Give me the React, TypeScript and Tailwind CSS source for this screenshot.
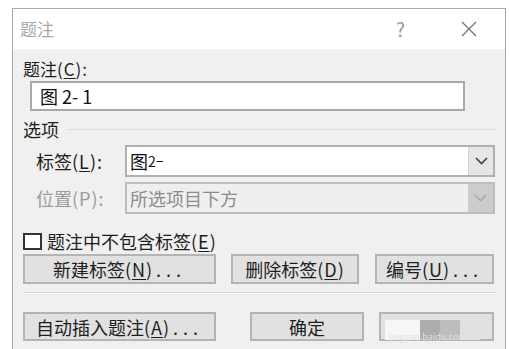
import React from "react";

const font = { fontFamily: '"Noto Sans CJK SC", "Noto Sans", sans-serif' };

function Key({ k }: { k: string }) {
  return (
    <span className="tracking-[1px]">
      (<span className="underline underline-offset-2">{k}</span>)
    </span>
  );
}

function Dots() {
  return <span className="ml-[3px] tracking-[5px]">...</span>;
}

function Chevron({ color }: { color: string }) {
  return (
    <svg width="13" height="8" viewBox="0 0 13 8" fill="none">
      <path d="M1 1l5.5 5.5L12 1" stroke={color} strokeWidth="1.6" />
    </svg>
  );
}

function Button({ className, children }: { className: string; children?: React.ReactNode }) {
  return (
    <div
      className={`flex items-center justify-center border-2 border-[#b4b4b4] bg-[#e1e1e1] text-[18px] leading-none text-[#1e1e1e] ${className}`}
    >
      {children}
    </div>
  );
}

export default function App() {
  return (
    <div className="h-[349px] w-[509px] overflow-hidden bg-white" style={font}>
      <div className="ml-[12px] mt-[8px] h-[341px] w-[494px] border-l border-r border-t border-[#a8a8a8] bg-[#f0f0f0]">
        {/* title bar */}
        <div className="flex h-[40px] items-center bg-white pl-[7px] pr-[28px]">
          <span className="text-[17px] text-[#a9a9a9]">题注</span>
          <span className="ml-auto mr-[56px] text-[19px] text-[#9a9a9a]">?</span>
          <svg width="16" height="16" viewBox="0 0 16 16">
            <path d="M1 1l14 14M15 1L1 15" stroke="#6f6f6f" strokeWidth="1.2" />
          </svg>
        </div>

        <div className="pl-[10px] leading-none text-[#1e1e1e]">
          <div className="mt-[8px] flex h-[22px] items-center text-[17px]">
            题注<Key k="C" />:
          </div>
          <div className="ml-[7px] mt-[2px] flex h-[30px] w-[435px] items-center border-2 border-[#a8a8a8] bg-white pl-[8px] text-[18px] text-[#111]">
            图 2- 1
          </div>

          <div className="mt-[8px] flex h-[20px] items-center">
            <span className="text-[18px]">选项</span>
            <div className="ml-[8px] mr-[10px] h-px flex-1 bg-[#dcdcdc]" />
          </div>

          <div className="mt-[6px] flex h-[32px] items-center">
            <span className="w-[102px] pl-[13px] text-[18px]">
              标签<Key k="L" />:
            </span>
            <div className="flex h-[32px] w-[370px] border-2 border-[#b0b0b0] bg-white">
              <div className="flex flex-1 items-center pl-[3px] text-[18px] text-[#111]">
                图<span className="text-[14px]">2−</span>
              </div>
              <div className="flex w-[25px] items-center justify-center border-l border-[#d4d4d4] bg-[#e6e6e6]">
                <Chevron color="#444" />
              </div>
            </div>
          </div>

          <div className="mt-[5px] flex h-[32px] items-center">
            <span className="w-[102px] pl-[13px] text-[18px] text-[#9a9a9a]">
              位置<span className="tracking-[1px]">(P)</span>:
            </span>
            <div className="flex h-[32px] w-[370px] border-2 border-[#bdbdbd] bg-[#efefef]">
              <div className="flex flex-1 items-center pl-[3px] text-[18px] text-[#8c8c8c]">
                所选项目下方
              </div>
              <div className="flex w-[25px] items-center justify-center bg-[#cccccc]">
                <Chevron color="#a8a8a8" />
              </div>
            </div>
          </div>

          <div className="mt-[17px] flex h-[20px] items-center">
            <div className="h-[17px] w-[19px] border-2 border-[#333] bg-white" />
            <span className="ml-[5px] text-[18px]">
              题注中不包含标签<Key k="E" />
            </span>
          </div>

          <div className="mt-[3px] flex h-[30px]">
            <Button className="w-[193px]">
              新建标签<Key k="N" />
              <Dots />
            </Button>
            <Button className="ml-[15px] w-[128px]">
              删除标签<Key k="D" />
            </Button>
            <Button className="ml-[16px] w-[119px]">
              编号<Key k="U" />
              <Dots />
            </Button>
          </div>

          <div className="mr-[10px] mt-[8px] h-[2px] border-t border-[#d9d9d9] bg-white" />

          <div className="mt-[18px] flex h-[29px]">
            <Button className="w-[193px]">
              自动插入题注<Key k="A" />
              <Dots />
            </Button>
            <Button className="ml-[34px] w-[114px]">确定</Button>
            <Button className="relative ml-[15px] w-[115px]">
              <div className="absolute left-[4px] top-[6px] flex h-[20px]">
                <div className="w-[35px] bg-[#f6f6f6]" />
                <div className="w-[20px] bg-[#adadad]" />
                <div className="w-[20px] bg-[#bdbdbd]" />
                <div className="w-[20px] bg-[#e0e0e0]" />
              </div>
              <span className="absolute bottom-[-2px] left-[8px] text-[9px] text-[#e0e0e0]">
                jingyan.baidu.com
              </span>
            </Button>
          </div>
        </div>
      </div>
    </div>
  );
}
